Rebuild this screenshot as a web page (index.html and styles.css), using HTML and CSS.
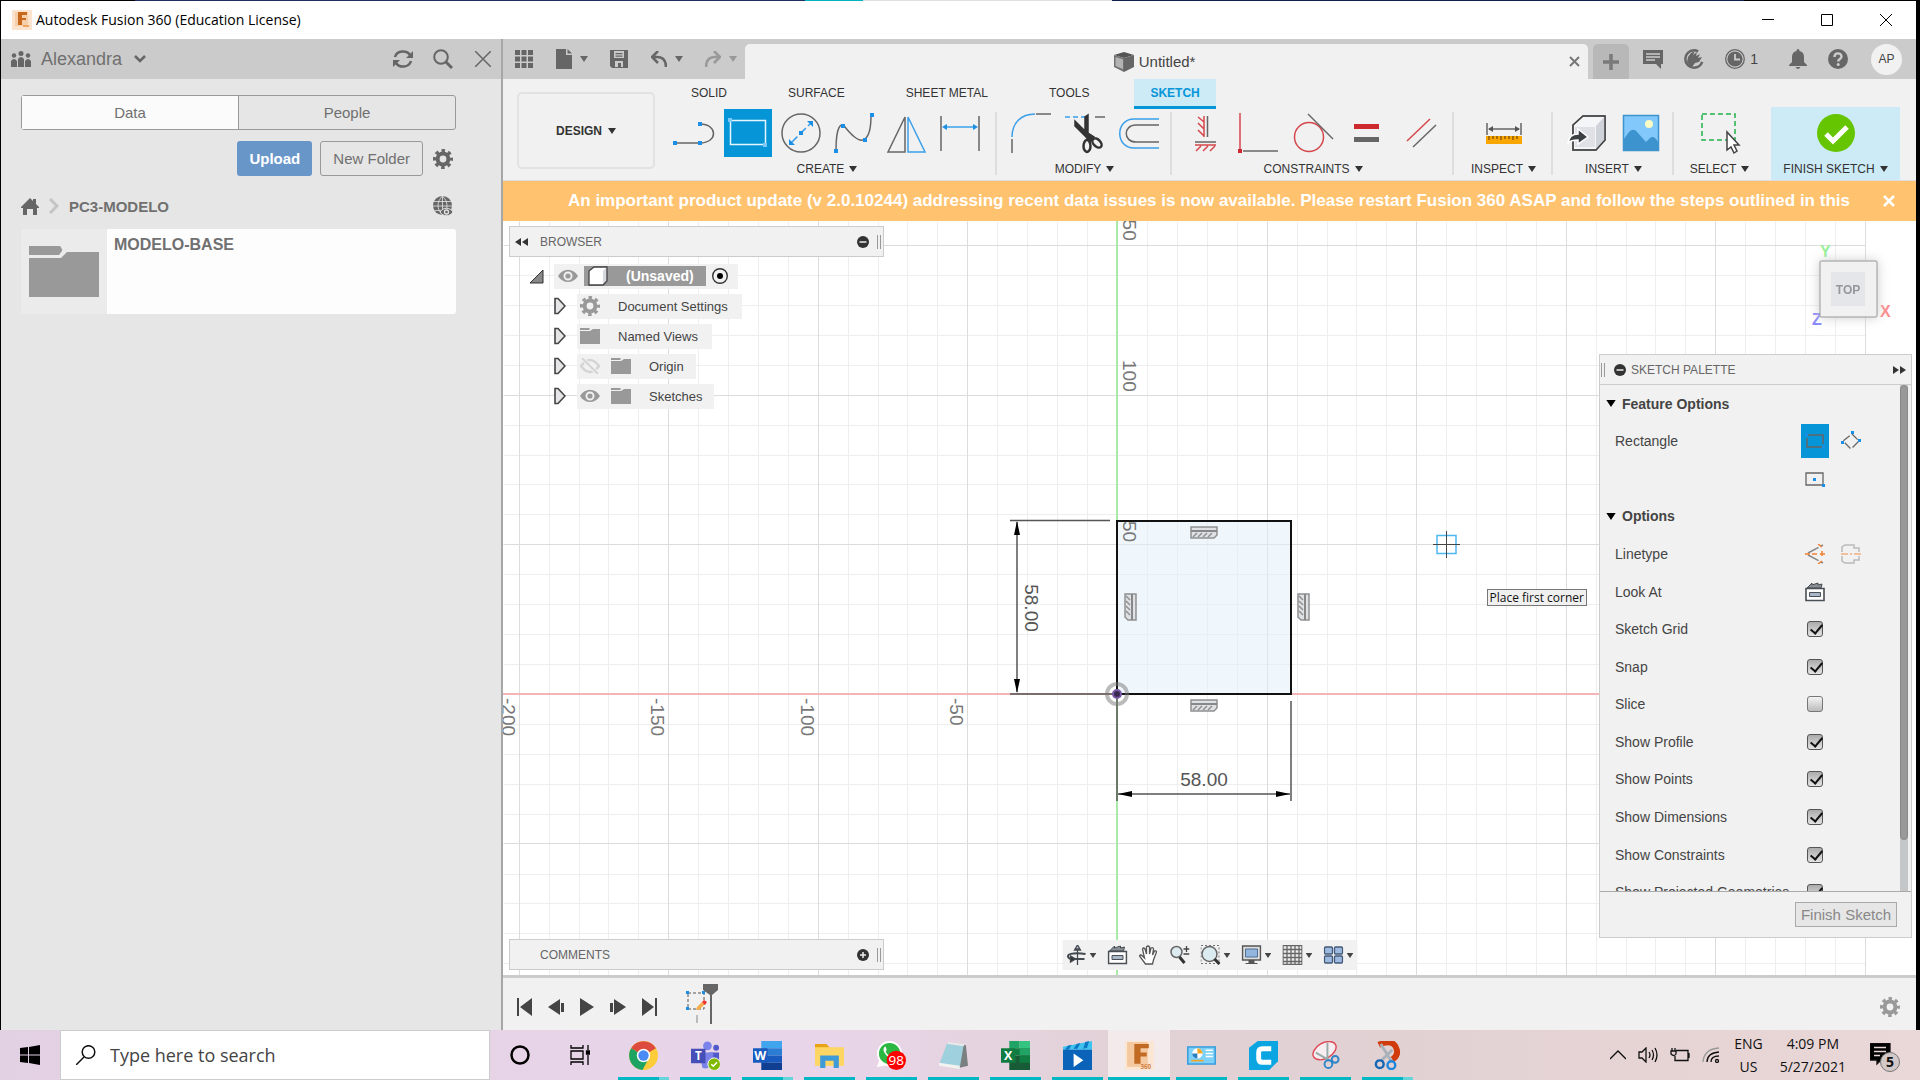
FILE: index.html
```html
<!DOCTYPE html>
<html lang="en">
<head>
    <meta charset="UTF-8">
    <meta name="viewport" content="width=device-width, initial-scale=1.0">
    <title>Autodesk Fusion 360 (Education License)</title>
    <link rel="stylesheet" href="styles.css">
</head>
<body>

<!-- shared icons -->
<svg class="sprite" aria-hidden="true">
    <symbol id="caret" viewBox="0 0 8 6"><path d="M0 0h8L4 6z"/></symbol>
    <symbol id="gear" viewBox="0 0 20 20">
        <circle cx="10" cy="10" r="5.4" fill="none" stroke="currentColor" stroke-width="4"/>
        <circle cx="10" cy="10" r="8.3" fill="none" stroke="currentColor" stroke-width="3.4" stroke-dasharray="3.4 3.12" stroke-dashoffset="1.7"/>
    </symbol>
    <symbol id="folder" viewBox="0 0 20 16"><path d="M0 0h9l1 1-1 1H0zM0 3h10l3-2h7v15H0z"/></symbol>
    <symbol id="eye" viewBox="0 0 20 14">
        <path fill-rule="evenodd" d="M0 7C5-1.500 15-1.500 20 7 15 15 5 15 0 7zM10 2.500a4.500 4.500 0 1 0 0 9 4.500 4.500 0 0 0 0-9z"/>
        <circle cx="10" cy="7" r="2.600"/>
    </symbol>
    <symbol id="expand" viewBox="0 0 12 18"><path d="M1 1.500h3L11 9l-7 7.500H1z" fill="#e6e6e8" stroke="#444" stroke-width="1.600"/></symbol>
    <symbol id="minus" viewBox="0 0 12 12"><circle cx="6" cy="6" r="6"/><path d="M2.500 6h7" stroke="#eee" stroke-width="1.500"/></symbol>
    <symbol id="plus" viewBox="0 0 12 12"><circle cx="6" cy="6" r="6"/><path d="M3 6h6M6 3v6" stroke="#eee" stroke-width="1.500"/></symbol>
    <symbol id="lookat" viewBox="0 0 20 20">
        <path d="M2 6l5-5v2l6-2v2l4-1-1 4z" fill="#8b9096" stroke="#444a50"/>
        <path d="M1 6.500h18v12H1z" fill="#fff" stroke="#4a4f55" stroke-width="1.600"/>
        <path d="M4.500 10.500h11v4h-11z" fill="#a9b7c8" stroke="#4a4f55"/>
    </symbol>
</svg>

<div class="window">
    <div class="desktop-edge"></div>
    <header class="title-bar">
        <svg class="app-logo" width="20" height="20" viewBox="0 0 20 20"><path fill="#fbe3cd" d="M0 0h20v20H0z"/><path fill="#f6cfaa" d="M3 2h13v14H3z"/><path fill="#c8681c" d="M6 2h9v3h-5v3h4v2h-4v5H6z"/><path fill="#eea663" d="M11 15h6v2h-6z"/></svg>
        <span>Autodesk Fusion 360 (Education License)</span>
        <div class="window-buttons">
            <button aria-label="Minimize"><svg width="12" height="12" viewBox="0 0 12 12"><path d="M0 5.500h12"/></svg></button>
            <button aria-label="Maximize"><svg width="12" height="12" viewBox="0 0 12 12"><path d="M.5.500h11v11H.5z"/></svg></button>
            <button aria-label="Close"><svg width="12" height="12" viewBox="0 0 12 12"><path d="M0 0l12 12M12 0L0 12"/></svg></button>
        </div>
    </header>

    <div class="content">
        <aside class="data-panel">
            <div class="data-header">
                <svg width="20" height="16" viewBox="0 0 20 16" fill="#666"><circle cx="10" cy="2.500" r="2.500"/><circle cx="3" cy="4.500" r="2.200"/><circle cx="17" cy="4.500" r="2.200"/><path d="M7 16V8q3-4 6 0v8zM0 16v-6q3-4 6 0v6zM14 16v-6q3-4 6 0v6z"/></svg>
                <button class="team">Alexandra <svg width="12" height="8" viewBox="0 0 12 8"><path d="M1 1l5 5 5-5" fill="none" stroke="#666" stroke-width="2.500"/></svg></button>
                <button aria-label="Refresh"><svg width="20" height="18" viewBox="0 0 20 18" fill="none" stroke="#666" stroke-width="2.500"><path d="M2 7c2-7 12-7 15-2M18 11c-2 7-12 7-15 2"/><path d="M20 1v7h-7zM0 17v-7h7z" fill="#666" stroke="none"/></svg></button>
                <button aria-label="Search"><svg width="20" height="20" viewBox="0 0 20 20" fill="none" stroke="#666"><circle cx="8" cy="8" r="6.800" stroke-width="2"/><path d="M13 13l6 6" stroke-width="3"/></svg></button>
                <button aria-label="Close panel"><svg width="16" height="16" viewBox="0 0 16 16" stroke="#666" stroke-width="1.500"><path d="M0 0l16 16M16 0L0 16"/></svg></button>
            </div>
            <div class="data-body">
                <div class="data-tabs">
                    <button class="active">Data</button>
                    <button>People</button>
                </div>
                <div class="data-actions">
                    <button class="upload">Upload</button>
                    <button class="new-folder">New Folder</button>
                    <button class="plain" aria-label="Settings"><svg width="20" height="20"><use href="#gear"/></svg></button>
                </div>
                <nav class="breadcrumb">
                    <a href="#" aria-label="Home"><svg width="18" height="17" viewBox="0 0 18 17" fill="#666"><path d="M9 0l3 3V1h3v5l3 3v1h-2v7h-4v-6H6v6H2v-7H0V9z"/></svg></a>
                    <svg width="10" height="16" viewBox="0 0 10 16"><path d="M1 1l7 7-7 7" fill="none" stroke="#c4c4c4" stroke-width="3"/></svg>
                    <a href="#">PC3-MODELO</a>
                    <button class="plain globe" aria-label="Open on the web"><svg width="20" height="20" viewBox="0 0 20 20"><circle cx="9.500" cy="9.500" r="9.500" fill="#666"/><path d="M0 5.500h19M0 10h19M2 14.500h15M9.500 0v19M9.500 0c-6 6-6 13 0 19M9.500 0c6 6 6 13 0 19" fill="none" stroke="#e6e6e6" stroke-width=".8"/><path d="M7 16c3-5 10-5 13 0-3 5-10 5-13 0z" fill="#666" stroke="#e6e6e6"/><circle cx="13.500" cy="16" r="2" fill="#666" stroke="#e6e6e6" stroke-width="1.300"/></svg></button>
                </nav>
                <a class="folder-card" href="#">
                    <span class="thumb"><svg width="70" height="51" viewBox="0 0 70 51" fill="#999"><path d="M0 0h31q3 4 2 5l-3 4H0z"/><path d="M0 12h32l6-6h32v45H0z"/></svg></span>
                    <span class="folder-name">MODELO-BASE</span>
                </a>
            </div>
        </aside>

        <main class="workspace">
            <div class="tab-bar">
                <div class="quick-access">
                    <button aria-label="Show data panel"><svg width="18" height="18" viewBox="0 0 18 18"><path d="M0 0h5v5H0zM6.500 0h5v5h-5zM13 0h5v5h-5zM0 6.500h5v5H0zM6.500 6.500h5v5h-5zM13 6.500h5v5h-5zM0 13h5v5H0zM6.500 13h5v5h-5zM13 13h5v5h-5z"/></svg></button>
                    <button aria-label="File"><svg width="16" height="20" viewBox="0 0 16 20"><path d="M0 0h10v6h6v14H0zM11.500 0L16 4.500h-4.500z"/></svg><svg class="caret" width="8" height="6"><use href="#caret"/></svg></button>
                    <button aria-label="Save"><svg width="18" height="18" viewBox="0 0 18 18"><path fill-rule="evenodd" d="M0 0h18v18H2l-2-2zM4 1v7h10V1zM5 11v6h8v-6z"/><path d="M5.500 3h7v1.300h-7zM5.500 5.500h7v1.300h-7zM8 13h3v4H8z"/></svg></button>
                    <button aria-label="Undo"><svg width="16" height="16" viewBox="0 0 16 16"><path d="M7 0v0L1 6l6 6M1 6h5q9 0 9 10" fill="none" stroke="#666" stroke-width="2.500"/></svg><svg class="caret" width="8" height="6"><use href="#caret"/></svg></button>
                    <button class="disabled" aria-label="Redo"><svg width="16" height="16" viewBox="0 0 16 16"><path d="M9 0l6 6-6 6M15 6h-5Q1 6 1 16" fill="none" stroke="#999" stroke-width="2.500"/></svg><svg class="caret" width="8" height="6"><use href="#caret"/></svg></button>
                </div>
                <div class="document-tab">
                    <svg width="20" height="20" viewBox="0 0 20 20"><path d="M0 3L10 0l10 3-10 3z" fill="#555"/><path d="M20 3v12l-10 5V6z" fill="#666"/><path d="M0 3l10 3v14L0 15z" fill="#707070"/><path d="M1.500 5L9 7.300v10L1.500 14z" fill="#b3b3b3"/></svg>
                    <span>Untitled*</span>
                    <button class="close-tab" aria-label="Close tab"><svg width="11" height="11" viewBox="0 0 11 11" stroke="#777" stroke-width="2"><path d="M1 1l9 9M10 1l-9 9"/></svg></button>
                </div>
                <button class="new-tab" aria-label="New tab"><svg width="16" height="16" viewBox="0 0 16 16"><path d="M0 8h16M8 0v16" stroke="#7a7a7a" stroke-width="3.500"/></svg></button>
                <div class="account">
                    <button aria-label="Comments"><svg width="20" height="19" viewBox="0 0 20 19"><path d="M0 0h20v14h-2v5l-5-5H0z"/><path d="M3 4h14M3 7h14M3 10h9" stroke="#ccc" stroke-width="1.300"/></svg></button>
                    <button aria-label="Extensions"><svg width="20" height="20" viewBox="0 0 20 20"><circle cx="10" cy="10" r="8.700" fill="none" stroke="#666" stroke-width="2.500" stroke-dasharray="42 13" stroke-dashoffset="-3"/><path d="M4 8l3-4 4-2-2 4 4-3-1 4 4-2-2 4 4-1-3 5-4 1-3 4-2-1-3-4z"/></svg></button>
                    <button aria-label="Job status"><svg width="20" height="20" viewBox="0 0 20 20"><circle cx="10" cy="10" r="9.300" fill="none" stroke="#666" stroke-width="1.300"/><circle cx="10" cy="10" r="7.600"/><path d="M10 5v5.500h5" fill="none" stroke="#ccc" stroke-width="1.800"/></svg><span>1</span></button>
                    <button class="bell" aria-label="Notifications"><svg width="18" height="20" viewBox="0 0 18 20"><path d="M9 0q1.500 0 1.500 2 4.500 1 4.500 6v5l3 3v1H0v-1l3-3V8q0-5 4.500-6Q7.500 0 9 0zM6.500 18h5q-2.500 4-5 0z"/></svg></button>
                    <button aria-label="Help"><svg width="20" height="20" viewBox="0 0 20 20"><circle cx="10" cy="10" r="10"/><path d="M6.500 8c0-5 7-4.500 7-.5 0 2.500-3.300 2.500-3.300 5" fill="none" stroke="#ccc" stroke-width="2.400"/><circle cx="10.200" cy="15.500" r="1.500" fill="#ccc"/></svg></button>
                    <button class="avatar">AP</button>
                </div>
            </div>

            <div class="ribbon">
                <button class="design">DESIGN <svg class="caret" width="8" height="6"><use href="#caret"/></svg></button>
                <div class="ribbon-main">
                    <nav class="ribbon-tabs">
                        <button>SOLID</button>
                        <button>SURFACE</button>
                        <button>SHEET METAL</button>
                        <button>TOOLS</button>
                        <button class="active">SKETCH</button>
                    </nav>
                    <div class="groups">
                        <section class="group create">
                            <div class="tools">
                                <button aria-label="Line"><svg viewBox="0 0 48 48"><path d="M4 34h25c18 0 18-19 0-19" /><path class="pt" d="M2 32h4v4H2zM27 32h4v4h-4zM27 13h4v4h-4z"/></svg></button>
                                <button class="active" aria-label="Rectangle"><svg viewBox="0 0 48 48"><path d="M6.500 11.500h35v24h-35z" stroke="#e8f4fb"/><path d="M4 9h4v4H4zM39 34h4v4h-4z" fill="#7cc8f8" stroke="none"/></svg></button>
                                <button aria-label="Circle"><svg viewBox="0 0 48 48"><circle cx="24" cy="24" r="19"/><path class="blue" d="M14 34l20-20" stroke-dasharray="9 3"/><path class="pt" d="M36 12v6l-6-6zM12 36v-6l6 6zM22 22h4v4h-4z"/></svg></button>
                                <button aria-label="Spline"><svg viewBox="0 0 48 48"><path d="M6 41c0-24 5-28 9-23s14 17 20 12c5-4 6-14 6-23"/><path class="pt" d="M4 40h4v4H4zM11 15h4v4h-4zM33 29h4v4h-4zM40 4h4v4h-4z"/></svg></button>
                                <button aria-label="Mirror"><svg viewBox="0 0 48 48"><path d="M22 8v35H5z"/><path class="blue" d="M25 8v35h17z"/></svg></button>
                                <button aria-label="Sketch dimension"><svg viewBox="0 0 48 48"><path d="M5 7v35M43 7v35"/><path class="blue" d="M8 18h32"/><path class="pt" d="M6 18l5-3v6zM42 18l-5-3v6z"/></svg></button>
                            </div>
                            <button class="group-label">CREATE <svg class="caret" width="8" height="6"><use href="#caret"/></svg></button>
                        </section>
                        <section class="group modify">
                            <div class="tools">
                                <button aria-label="Fillet"><svg viewBox="0 0 48 48"><path class="blue" d="M5 28C5 14 14 5 28 5"/><path d="M5 30v14M29 5h15"/></svg></button>
                                <button aria-label="Trim"><svg viewBox="0 0 48 48"><path class="blue" d="M4 8h22" stroke-dasharray="5 3"/><path d="M34 8h10"/><path d="M27 6v18l6 4-4 5-4-5L14 17v-5l10 10V8z" fill="#333" stroke="#333"/><ellipse cx="26" cy="37" rx="3.500" ry="6" stroke="#333" stroke-width="2.500"/><ellipse cx="36" cy="34" rx="3.500" ry="5.500" transform="rotate(-45 36 34)" stroke="#333" stroke-width="2.500"/></svg></button>
                                <button aria-label="Offset"><svg viewBox="0 0 48 48"><path class="blue" d="M44 10H19C0 10 0 39 19 39h25"/><path d="M44 16H21c-13 0-13 17 0 17h23"/></svg></button>
                            </div>
                            <button class="group-label">MODIFY <svg class="caret" width="8" height="6"><use href="#caret"/></svg></button>
                        </section>
                        <section class="group constraints">
                            <div class="tools">
                                <button aria-label="Horizontal or vertical"><svg viewBox="0 0 48 48"><path d="M26.500 7v21M14 33h21"/><path class="red" d="M23 7v21M17 8l6 5M17 14l6 6M17 21l6 6M14 36h21M20 37l-5 5M27 37l-5 5M34 37l-5 5"/></svg></button>
                                <button aria-label="Coincident"><svg viewBox="0 0 48 48"><path class="red" d="M5 4v36"/><path d="M8 42h35"/><path d="M3 40h4v4H3z" fill="#cc2a2f" stroke="none"/></svg></button>
                                <button aria-label="Tangent"><svg viewBox="0 0 48 48"><circle class="red" cx="20" cy="28" r="14.500"/><path d="M19 5l25 25"/></svg></button>
                                <button aria-label="Equal"><svg viewBox="0 0 48 48"><path d="M11 15h25v5H11z" fill="#cc2a2f" stroke="none"/><path d="M11 28h25v5H11z" fill="#666" stroke="none"/></svg></button>
                                <button aria-label="Parallel"><svg viewBox="0 0 48 48"><path class="red" d="M10 32L33 10"/><path d="M16 38l23-22"/></svg></button>
                            </div>
                            <button class="group-label">CONSTRAINTS <svg class="caret" width="8" height="6"><use href="#caret"/></svg></button>
                        </section>
                        <section class="group inspect">
                            <div class="tools">
                                <button aria-label="Measure"><svg viewBox="0 0 48 48"><path d="M7 14v12M41 14v12M9 20h30"/><path d="M8 20l5-3v6zM40 20l-5-3v6z" fill="#555" stroke="none"/><path d="M6 27h36v8H6z" fill="#f9a602" stroke="none"/><path d="M9 27v4M13 27v3M17 27v3M21 27v4M25 27v3M29 27v3M33 27v4M37 27v3" stroke="#8a5c00"/></svg></button>
                            </div>
                            <button class="group-label">INSPECT <svg class="caret" width="8" height="6"><use href="#caret"/></svg></button>
                        </section>
                        <section class="group insert">
                            <div class="tools">
                                <button aria-label="Insert derive"><svg viewBox="0 0 48 48"><path d="M10 16l10-9h22v24l-9 10H10z" fill="#f4f5f7"/><path d="M33 17l9-10v24l-9 10z" fill="#cfd2d8" stroke="none"/><path d="M12 18h20v20H12z" fill="#dfe1e6" stroke="none"/><path d="M10 16l10-9h22v24l-9 10H10z" stroke="#444"/><path d="M5 34c1-7 5-9 10-9v-5l10 8-10 7v-4c-4 0-7 0-10 3z" fill="#3c4043" stroke="#fff"/></svg></button>
                                <button aria-label="Canvas"><svg viewBox="0 0 48 48"><path d="M6.500 6.500h35v35h-35z" fill="#82c8fb" stroke="#3d93cd"/><path d="M7 30l5-7q5-5 9 1l8 9 4-4q4-3 8 4v8H7z" fill="#3d93cd" stroke="none"/><circle cx="32" cy="15" r="4" fill="#fbfbc5" stroke="none"/></svg></button>
                            </div>
                            <button class="group-label">INSERT <svg class="caret" width="8" height="6"><use href="#caret"/></svg></button>
                        </section>
                        <section class="group select">
                            <div class="tools">
                                <button aria-label="Select"><svg viewBox="0 0 48 48"><path d="M6 5h33v26H6z" stroke="#22b14c" stroke-width="1.500" stroke-dasharray="5 3"/><path d="M31 23v18l4-3 3 6 3-2-3-6h5z" fill="#fff" stroke="#444"/></svg></button>
                            </div>
                            <button class="group-label">SELECT <svg class="caret" width="8" height="6"><use href="#caret"/></svg></button>
                        </section>
                        <section class="group finish">
                            <div class="tools">
                                <button aria-label="Finish sketch"><svg viewBox="0 0 48 48"><circle cx="24" cy="24" r="19" fill="#65c500" stroke="none"/><path d="M14 25l7 7 14-14" stroke="#fff" stroke-width="5"/></svg></button>
                            </div>
                            <button class="group-label">FINISH SKETCH <svg class="caret" width="8" height="6"><use href="#caret"/></svg></button>
                        </section>
                    </div>
                </div>
            </div>

            <div class="banner" role="alert">
                <p>An important product update (v 2.0.10244) addressing recent data issues is now available. Please restart Fusion 360 ASAP and follow the steps outlined in this</p>
                <button aria-label="Dismiss"><svg width="12" height="12" viewBox="0 0 12 12"><path d="M1 1l10 10M11 1L1 11" stroke="#fff" stroke-width="2.500"/></svg></button>
            </div>

            <div class="canvas">
                <svg class="drawing" viewBox="503 221 1413 754" preserveAspectRatio="xMidYMid slice">
                    <g transform="translate(.5 .5)" fill="none">
                        <path stroke="#eee" d="M549 221v756M579 221v756M608 221v756M638 221v756M698 221v756M728 221v756M758 221v756M788 221v756M848 221v756M878 221v756M907 221v756M937 221v756M997 221v756M1027 221v756M1057 221v756M1087 221v756M1147 221v756M1177 221v756M1207 221v756M1237 221v756M1297 221v756M1327 221v756M1356 221v756M1386 221v756M1446 221v756M1476 221v756M1506 221v756M1536 221v756M1596 221v756M1626 221v756M1655 221v756M1685 221v756M1745 221v756M1775 221v756M1805 221v756M1835 221v756"/>
                        <path stroke="#eee" d="M503 275h1362M503 305h1362M503 335h1362M503 365h1362M503 425h1362M503 455h1362M503 484h1362M503 514h1362M503 574h1362M503 604h1362M503 634h1362M503 664h1362M503 724h1362M503 754h1362M503 784h1362M503 814h1362M503 874h1362M503 903h1362M503 933h1362M503 963h1362"/>
                        <path stroke="#dcdcdc" d="M519 221v756M668 221v756M818 221v756M967 221v756M1267 221v756M1416 221v756M1566 221v756M1715 221v756M1865 221v756M503 245h1362M503 395h1362M503 544h1362M503 843h1362"/>
                    </g>
                    <path d="M503 694h1362" stroke="#f3b5b5" stroke-width="2"/>
                    <path d="M1117 221v756" stroke="#a9eaa9" stroke-width="2"/>

                    <!-- 58 x 58 profile -->
                    <path d="M1117 521h174v173h-174z" fill="#dff0fb" fill-opacity=".5" stroke="#111" stroke-width="2"/>

                    <g class="axis-labels">
                        <text transform="translate(1123 209) rotate(90)">150</text>
                        <text transform="translate(1123 360) rotate(90)">100</text>
                        <text transform="translate(1123 521) rotate(90)">50</text>
                        <text transform="translate(950 698) rotate(90)">-50</text>
                        <text transform="translate(801 698) rotate(90)">-100</text>
                        <text transform="translate(651 698) rotate(90)">-150</text>
                        <text transform="translate(502 698) rotate(90)">-200</text>
                    </g>

                    <g stroke="#555" stroke-width="1.500">
                        <path d="M1010 520.500h100M1010 694h107M1017 522v170M1117 694v107M1291 701v100M1118 794h172"/>
                    </g>
                    <path d="M1017 521l3 14h-6zM1017 693l3-14h-6zM1118 794l14-3v6zM1290 794l-14-3v6z"/>
                    <g class="dimension">
                        <text transform="translate(1025 608) rotate(90)" text-anchor="middle">58.00</text>
                        <text x="1204" y="786" text-anchor="middle">58.00</text>
                    </g>
                    <circle cx="1117" cy="694" r="10" fill="none" stroke="#777" stroke-opacity=".5" stroke-width="4"/>
                    <circle cx="1117" cy="694" r="4" fill="#3a2a50" stroke="#7a5aa8" stroke-width="2"/>

                    <symbol id="edge" viewBox="0 0 28 13"><path d="M1 1h26v8l-3 3H1z" fill="#dfe2e5" stroke="#909090" stroke-width="1.500"/><path d="M1 5h26" stroke="#888" stroke-width="2"/><path d="M7 7l-4 4M12 7l-4 4M17 7l-4 4M22 7l-4 4" stroke="#909090" stroke-width="1.500"/></symbol>
                    <use href="#edge" x="1190" y="526" width="28" height="13"/>
                    <use href="#edge" x="1190" y="699" width="28" height="13"/>
                    <use href="#edge" width="28" height="13" transform="translate(1137 593) rotate(90)"/>
                    <use href="#edge" width="28" height="13" transform="translate(1310 593) rotate(90)"/>

                    <!-- cursor -->
                    <path d="M1437 535.500h19v18h-19z" fill="none" stroke="#4db8f0" stroke-width="1.500"/>
                    <path d="M1433 544.500h27M1446.500 531v27" stroke="#444"/>

                    <!-- view cube -->
                    <g class="axis-names">
                        <text x="1820" y="257" fill="#97f097">Y</text>
                        <text x="1880" y="317" fill="#ff8c8c">X</text>
                        <text x="1812" y="325" fill="#8888ff">Z</text>
                    </g>
                    <g class="view-cube">
                        <rect x="1820" y="261" width="57" height="56" rx="1" fill="#f1f1f1" stroke="#999"/>
                        <path d="M1831 272h34v34h-34z" fill="#e5e6e9"/>
                        <text x="1848" y="294" text-anchor="middle">TOP</text>
                    </g>
                </svg>

                <div class="browser">
                    <div class="panel-header">
                        <button aria-label="Collapse"><svg width="13" height="8" viewBox="0 0 13 8"><path d="M6 0v8L0 4zM13 0v8L7 4z"/></svg></button>
                        <span>BROWSER</span>
                        <button aria-label="Hide"><svg width="12" height="12"><use href="#minus"/></svg></button>
                        <i class="grip"></i>
                    </div>
                    <ul class="tree">
                        <li class="root">
                            <svg width="15" height="15" viewBox="0 0 15 15"><path d="M14 1v13H1z" fill="#888" stroke="#333"/></svg>
                            <span class="node">
                                <svg class="grey" width="20" height="14"><use href="#eye"/></svg>
                                <span class="selected"><svg width="20" height="20" viewBox="0 0 20 20"><path d="M1 5l5-4h13v14l-4 4H1z" fill="#fff"/><path d="M15 5l4-4v14l-4 4z" fill="#d5d8de"/><path d="M1 5l5-4h13v14l-4 4H1z" fill="none" stroke="#444" stroke-width="1.300"/></svg>(Unsaved)</span>
                                <svg width="16" height="16" viewBox="0 0 16 16"><circle cx="8" cy="8" r="7.300" fill="none" stroke="#333" stroke-width="1.400"/><circle cx="8" cy="8" r="3"/></svg>
                            </span>
                        </li>
                        <li><svg width="12" height="18"><use href="#expand"/></svg><span class="node"><svg class="grey" width="20" height="20"><use href="#gear"/></svg>Document Settings</span></li>
                        <li><svg width="12" height="18"><use href="#expand"/></svg><span class="node"><svg class="grey" width="20" height="16"><use href="#folder"/></svg>Named Views</span></li>
                        <li><svg width="12" height="18"><use href="#expand"/></svg><span class="node nested"><svg class="faded" width="20" height="16" viewBox="0 0 20 16"><path d="M1 8q9-12 18 0-9 12-18 0z" fill="none" stroke="#d4d4d4" stroke-width="2.500"/><path d="M2 0l16 16" stroke="#f1f1f1" stroke-width="4"/><path d="M2 0l16 16" stroke="#d4d4d4" stroke-width="2"/></svg><svg class="grey" width="20" height="16"><use href="#folder"/></svg>Origin</span></li>
                        <li><svg width="12" height="18"><use href="#expand"/></svg><span class="node nested"><svg class="grey" width="20" height="14"><use href="#eye"/></svg><svg class="grey" width="20" height="16"><use href="#folder"/></svg>Sketches</span></li>
                    </ul>
                </div>

                <div class="comments panel-header">
                    <span>COMMENTS</span>
                    <button aria-label="Show comments"><svg width="12" height="12"><use href="#plus"/></svg></button>
                    <i class="grip"></i>
                </div>

                <div class="nav-bar">
                    <button aria-label="Orbit"><svg width="20" height="20" viewBox="0 0 20 20" fill="none" stroke="#444a50" stroke-width="1.300"><path d="M11 4v16M9 4h4M11 0l3 5H8z" fill="#ccd"/><path d="M4 14C-4 9 8 7 19 9M6 14h12" stroke-width="2"/><path d="M4 11v6l5-3z" fill="#333"/></svg><svg class="caret" width="7" height="5"><use href="#caret"/></svg></button>
                    <button aria-label="Look at"><svg width="20" height="20"><use href="#lookat"/></svg></button>
                    <button aria-label="Pan"><svg width="20" height="20" viewBox="0 0 20 20"><path d="M7 19l-6-8q1-2 3 0l2 2-2-9q1-2 2.500 0L8 9V2q1.500-2 3 0v7l1.500-6q2-1 2.500 1l-1 6 2-4q2-.5 2 1l-3 8-1 4z" fill="#fff" stroke="#555" stroke-width="1.300"/></svg></button>
                    <button aria-label="Zoom"><svg width="20" height="20" viewBox="0 0 20 20"><circle cx="7" cy="7" r="5.500" fill="#dcebf0" stroke="#666" stroke-width="1.500"/><path d="M10 12l5 6" stroke="#333" stroke-width="3"/><path d="M14 4h6M17 1v6M14 9h6" stroke="#444" stroke-width="1.300"/></svg></button>
                    <button aria-label="Fit"><svg width="20" height="20" viewBox="0 0 20 20"><path d="M.5.500h18v18H.5z" fill="none" stroke="#777" stroke-dasharray="2 2"/><circle cx="9" cy="9" r="7.500" fill="#dcebf0" stroke="#666" stroke-width="1.500"/><path d="M14 14l5 5" stroke="#333" stroke-width="3"/></svg><svg class="caret" width="7" height="5"><use href="#caret"/></svg></button>
                    <button aria-label="Display settings"><svg width="20" height="20" viewBox="0 0 20 20"><path d="M1 1h18v14H1z" fill="#ddd" stroke="#555" stroke-width="1.500"/><path d="M4 4h12v8H4z" fill="#92b5de" stroke="#4f6f96"/><path d="M7 15h6v3h3v1H4v-1h3z" fill="#555"/></svg><svg class="caret" width="7" height="5"><use href="#caret"/></svg></button>
                    <button aria-label="Grid settings"><svg width="20" height="20" viewBox="0 0 20 20"><path d="M.5.500h19v19H.5zM4.500 0v20M8.500 0v20M12.500 0v20M16.500 0v20M0 4.500h20M0 8.500h20M0 12.500h20M0 16.500h20" fill="#eee" stroke="#666" stroke-width="1.300"/></svg><svg class="caret" width="7" height="5"><use href="#caret"/></svg></button>
                    <button aria-label="Viewports"><svg width="20" height="18" viewBox="0 0 20 18" fill="#9dbbe0" stroke="#445a78" stroke-width="1.300"><rect x="1" y="1" width="8" height="7" rx="1"/><rect x="11" y="1" width="8" height="7" rx="1"/><rect x="1" y="10" width="8" height="7" rx="1"/><rect x="11" y="10" width="8" height="7" rx="1"/></svg><svg class="caret" width="7" height="5"><use href="#caret"/></svg></button>
                </div>

                <div class="tooltip" role="tooltip">Place first corner</div>

                <form class="palette">
                    <div class="palette-header">
                        <i class="grip"></i>
                        <button type="button" aria-label="Collapse palette"><svg width="12" height="12"><use href="#minus"/></svg></button>
                        <span>SKETCH PALETTE</span>
                        <button type="button" aria-label="Dock"><svg width="13" height="8" viewBox="0 0 13 8"><path d="M0 0v8l6-4zM7 0v8l6-4z"/></svg></button>
                    </div>
                    <div class="palette-body">
                        <div class="options">
                            <h2><svg width="10" height="7"><use href="#caret"/></svg>Feature Options</h2>
                            <div class="option"><span>Rectangle</span>
                                <button type="button" class="active" aria-label="2-point rectangle"><svg width="20" height="16" viewBox="0 0 20 16"><path d="M2 2h16v12H2z" fill="none" stroke="#666" stroke-width="1.500" stroke-dasharray="25 3"/><path d="M0 0h3v3H0zM17 13h3v3h-3z" fill="#1b8fe6"/></svg></button>
                                <button type="button" aria-label="3-point rectangle"><svg width="20" height="20" viewBox="0 0 20 20"><path d="M11 3l7 7-8 8-8-8z" fill="none" stroke="#666" stroke-width="1.300" stroke-dasharray="8 3"/><path d="M10 0h3v3h-3zM17 8h3v3h-3zM0 10h3v3H0z" fill="#1b8fe6"/></svg></button>
                            </div>
                            <div class="option"><span></span>
                                <button type="button" aria-label="Center rectangle"><svg width="20" height="16" viewBox="0 0 20 16"><path d="M1 2h17v12H1z" fill="none" stroke="#666" stroke-width="1.300"/><path d="M8 7h3v3H8zM17 13h3v3h-3z" fill="#1b8fe6"/></svg></button>
                            </div>
                            <h2><svg width="10" height="7"><use href="#caret"/></svg>Options</h2>
                            <div class="option"><span>Linetype</span>
                                <button type="button" aria-label="Construction"><svg width="20" height="20" viewBox="0 0 20 20" fill="none" stroke-width="1.500"><path d="M3 9l15-8M3 11l15 8" stroke="#888" stroke-dasharray="12 2"/><path d="M0 10h14M17 7v6M15 10h5M13 0l4 3M13 20l4-3" stroke="#f08030" stroke-dasharray="5 2"/></svg></button>
                                <button type="button" aria-label="Centerline"><svg width="20" height="20" viewBox="0 0 20 20" fill="none" stroke="#bbb" stroke-width="1.500"><path d="M1 8V3l3-2h9v3h5v4M1 12v5l3 2h9v-3h5v-4"/><path d="M0 10h20" stroke="#f0b080" stroke-dasharray="7 2 2 2"/></svg></button>
                            </div>
                            <div class="option"><span>Look At</span>
                                <button type="button" aria-label="Look at"><svg width="20" height="20"><use href="#lookat"/></svg></button>
                            </div>
                            <label class="option"><span>Sketch Grid</span><input type="checkbox" checked></label>
                            <label class="option"><span>Snap</span><input type="checkbox" checked></label>
                            <label class="option"><span>Slice</span><input type="checkbox"></label>
                            <label class="option"><span>Show Profile</span><input type="checkbox" checked></label>
                            <label class="option"><span>Show Points</span><input type="checkbox" checked></label>
                            <label class="option"><span>Show Dimensions</span><input type="checkbox" checked></label>
                            <label class="option"><span>Show Constraints</span><input type="checkbox" checked></label>
                            <label class="option"><span>Show Projected Geometries</span><input type="checkbox" checked></label>
                        </div>
                        <div class="scrollbar"><i></i></div>
                    </div>
                    <div class="palette-footer"><button type="button">Finish Sketch</button></div>
                </form>
            </div>

            <div class="timeline">
                <button aria-label="Go to start"><svg width="16" height="18" viewBox="0 0 16 18"><path d="M0 0h2v18H0zM15 0v18L3 9z"/></svg></button>
                <button aria-label="Step back"><svg width="16" height="18" viewBox="0 0 16 18"><path d="M12 1v16L0 9zM13 5h3v9h-3z"/></svg></button>
                <button aria-label="Play"><svg width="16" height="18" viewBox="0 0 16 18"><path d="M1 0v18l14-9z"/></svg></button>
                <button aria-label="Step forward"><svg width="16" height="18" viewBox="0 0 16 18"><path d="M4 1v16l12-8zM0 5h3v9H0z"/></svg></button>
                <button aria-label="Go to end"><svg width="16" height="18" viewBox="0 0 16 18"><path d="M14 0h2v18h-2zM1 0v18l12-9z"/></svg></button>
                <button class="feature" aria-label="Sketch1"><svg width="34" height="40" viewBox="0 0 34 40"><path d="M4 9h16v16H4z" fill="none" stroke="#555" stroke-dasharray="3 2"/><path d="M2 7h3v3H2zM18 7h3v3h-3zM2 23h3v3H2z" fill="#1b8fe6"/><path d="M12 26l1-3 5-5 3 2-6 6z" fill="#f4ac4c"/><path d="M18 18l2-2 3 2-2 3z" fill="#e33"/><path d="M13 31v8" stroke="#bbb" stroke-width="2"/><path d="M19 0h15v6l-6 5v29h-2V11l-7-5z" fill="#666"/></svg></button>
                <button class="timeline-settings" aria-label="Timeline settings"><svg width="20" height="20"><use href="#gear"/></svg></button>
            </div>
        </main>
    </div>
</div>

<footer class="taskbar">
    <button class="start" aria-label="Start"><svg width="20" height="20" viewBox="0 0 20 20"><path d="M0 3l8-1v7.500H0zM9 2l11-2v9.500H9zM0 10.500h8V18l-8-1zM9 10.500h11V20L9 18z"/></svg></button>
    <label class="search">
        <svg width="20" height="20" viewBox="0 0 20 20" fill="none" stroke="#111" stroke-width="1.500"><circle cx="12.500" cy="7" r="6.300"/><path d="M8 12l-8 8"/></svg>
        <input type="text" placeholder="Type here to search" aria-label="Type here to search">
    </label>
    <button class="cortana" aria-label="Cortana"><svg width="20" height="20" viewBox="0 0 20 20"><circle cx="10" cy="10" r="8.500" fill="none" stroke="#000" stroke-width="2.500"/></svg></button>
    <button aria-label="Task view"><svg width="20" height="20" viewBox="0 0 20 20" fill="none" stroke="#000" stroke-width="1.300"><path d="M1 0v3h12V0M1 6h12v8H1zM1 20v-3h12v3M18 0v5M18 10v10"/><path d="M16.500 6h3v3h-3z" fill="#000"/></svg></button>
    <div class="apps">
        <button class="stacked" aria-label="Chrome"><svg viewBox="0 0 28 28"><circle cx="14" cy="14" r="14" fill="#fdcc3b"/><path d="M14 14L2 7a14 14 0 0 1 24 0z" fill="#dd4b3e"/><path d="M14 14L2 7a14 14 0 0 0 11 21l6-11z" fill="#1da462"/><circle cx="14" cy="14" r="6.500" fill="#fff"/><circle cx="14" cy="14" r="5" fill="#4a8af4"/></svg></button>
        <button aria-label="Teams"><svg viewBox="0 0 30 30"><circle cx="17" cy="5" r="4.500" fill="#7b83eb"/><circle cx="26" cy="7" r="3" fill="#5059c9"/><path d="M19 12h10v8q-2 6-8 5z" fill="#5059c9"/><path d="M8 12h15v10q-3 8-11 6z" fill="#7b83eb"/><path d="M0 8h15v15H0z" fill="#464eb8"/><text x="7.500" y="20" text-anchor="middle">T</text><circle cx="24" cy="24" r="6.500" fill="#7fba00" stroke="#fff"/><path d="M21 24l2 2 4-4" fill="none" stroke="#fff" stroke-width="1.500"/></svg></button>
        <button class="stacked" aria-label="Word"><svg viewBox="0 0 28 28"><path d="M8 0h20v7H8z" fill="#41a5ee"/><path d="M8 7h20v7H8z" fill="#2b7cd3"/><path d="M8 14h20v7H8z" fill="#185abd"/><path d="M8 21h20v7H8z" fill="#103f91"/><path d="M0 7h14v14H0z" fill="#185abd"/><text x="7" y="18" text-anchor="middle">W</text></svg></button>
        <button aria-label="File Explorer"><svg viewBox="0 0 28 28"><path d="M0 3h11l3 3v4H0z" fill="#e8a317"/><path d="M0 6h28v18H0z" fill="#ffd664"/><path d="M5 26V14h18v12h-5v-7h-8v7z" fill="#3f9ad8"/></svg></button>
        <button aria-label="WhatsApp"><svg viewBox="0 0 30 30"><circle cx="13" cy="13" r="13" fill="#fff"/><path d="M0 27l3-9 7 7z" fill="#fff"/><circle cx="13" cy="13" r="11" fill="#2cb742"/><path d="M8 6q-3 3 1 8 5 6 10 4v-3l-4-2-2 2q-3-1-4-4l1-2-1-3z" fill="#fff"/><circle cx="20" cy="20" r="10" fill="#f00"/><text class="count" x="20" y="25" text-anchor="middle">98</text></svg></button>
        <button aria-label="Notepad"><svg viewBox="0 0 28 28"><path d="M9 2l17 2 2 20-9 2z" fill="#7a7f80"/><path d="M8 2l16 1-4 23-20-3z" fill="#9fd0de"/><path d="M0 21l20 3v3L0 24z" fill="#f2f2ee"/><path d="M9 1l15 2v2L8 3z" fill="#e8e8e8"/></svg></button>
        <button aria-label="Excel"><svg viewBox="0 0 28 28"><path d="M8 0h10v7H8z" fill="#21a366"/><path d="M18 0h10v7H18z" fill="#33c481"/><path d="M8 7h20v7H8z" fill="#107c41"/><path d="M18 7h10v7H18z" fill="#21a366"/><path d="M8 14h20v14H8z" fill="#185c37"/><path d="M18 14h10v7H18z" fill="#107c41"/><path d="M0 7h14v14H0z" fill="#107c41"/><text x="7" y="18" text-anchor="middle">X</text></svg></button>
        <button aria-label="Movies"><svg viewBox="0 0 30 30"><path d="M0 6l30-6v9H0z" fill="#3ec3f0"/><path d="M5 5l4-1-3 5H2zM14 3l4-1-3 6h-4zM23 1l4-1-2 7-4 1z" fill="#0c7ac4"/><path d="M0 9h30v21H0z" fill="#0a63b8"/><path d="M11 13l10 7-10 7z" fill="#fff"/></svg></button>
        <button class="current" aria-label="Fusion 360"><svg viewBox="0 0 28 28"><path d="M0 0h28v28H0z" fill="#fbe6d3"/><path d="M2 1h20v24H2z" fill="#f5c9a0"/><path d="M9 3h14v4h-8v4h6v4h-6v7H9z" fill="#c06a24"/><text class="tiny" x="20" y="27" text-anchor="middle">360</text></svg></button>
        <button aria-label="Control Panel"><svg viewBox="0 0 28 28"><path d="M0 5h28v18H0z" fill="#3c9fdc"/><path d="M1.500 6.500h25v15h-25z" fill="#7dd0f7"/><circle cx="10" cy="12" r="5" fill="#fff"/><path d="M10 12V7a5 5 0 0 1 5 5z" fill="#f5a623"/><path d="M10 12H5a5 5 0 0 0 5 5z" fill="#2a7fc0"/><path d="M18 9h7M18 12h7M18 15h7" stroke="#fff" stroke-width="1.500"/><path d="M4 19h12" stroke="#f5a623" stroke-width="1.500"/></svg></button>
        <button aria-label="Cura"><svg viewBox="0 0 30 30"><path d="M0 7l9-7h21v21l-9 9H0z" fill="#0ba6e2"/><path d="M23 8H14q-4 0-4 4v6q0 4 4 4h9" fill="none" stroke="#fff" stroke-width="5"/></svg></button>
        <button aria-label="Snipping Tool"><svg viewBox="0 0 28 30" fill="none"><ellipse cx="13" cy="10" rx="13" ry="8" transform="rotate(-30 13 10)" fill="#f6eef0" stroke="#dd4a58" stroke-width="1.500"/><path d="M4 12l14 8M16 2v18" stroke="#9aa" stroke-width="2"/><circle cx="17" cy="24" r="4" stroke="#2d86c9" stroke-width="2"/><circle cx="24" cy="19" r="3.500" stroke="#2d86c9" stroke-width="2"/></svg></button>
        <button class="stacked" aria-label="Snip &amp; Sketch"><svg viewBox="0 0 28 30" fill="none"><path d="M5 4q12-6 17 1 5 9-3 14" stroke="#d13a0a" stroke-width="6"/><path d="M7 3l11 18M19 9L8 20" stroke="#a9b2b8" stroke-width="3"/><circle cx="6" cy="24" r="4" stroke="#1266b5" stroke-width="2.500"/><circle cx="18" cy="25" r="4" stroke="#1d86dd" stroke-width="2.500"/></svg></button>
    </div>
    <div class="tray">
        <button aria-label="Show hidden icons"><svg width="16" height="10" viewBox="0 0 16 10"><path d="M0 9l8-8 8 8"/></svg></button>
        <button aria-label="Volume"><svg width="20" height="16" viewBox="0 0 20 16"><path d="M1 5h3l4-4v14l-4-4H1zM11 5q2 3 0 6M14 3q3 5 0 10M17 1q4 7 0 14"/></svg></button>
        <button aria-label="Battery"><svg width="20" height="14" viewBox="0 0 20 14"><path d="M6 2.500h12v10H5V8M19 5v5M1 3h5v3q-2 3-5 0zM2 0v3M5 0v3"/></svg></button>
        <button aria-label="Wi-Fi"><svg width="18" height="16" viewBox="0 0 18 16"><path d="M1 15Q2 2 17 1" stroke="#999"/><path d="M5 15Q5 6 17 5M9 15q0-6 8-6"/><circle cx="15" cy="14" r="1.500"/></svg></button>
        <button class="language">ENG<br>US</button>
        <button class="clock">4:09 PM<br>5/27/2021</button>
        <button class="action-center" aria-label="5 notifications"><svg width="30" height="30" viewBox="0 0 30 30"><path d="M0 0h20v17h-9l-4 4v-4H0z" fill="#000"/><path d="M4 4.500h12M4 8.500h12M4 12.500h6" stroke="#ead8d8" stroke-width="1.300"/></svg><span>5</span></button>
    </div>
</footer>

</body>
</html>
```
FILE: styles.css
```css
* {
    box-sizing: border-box;
}

body {
    margin: 0;
    height: 100vh;
    display: flex;
    flex-direction: column;
    background-color: #000;
    color: #444;
    font-family: "Liberation Sans", Arial, sans-serif;
    font-size: 14px;
    overflow: hidden;
}

button {
    display: flex;
    align-items: center;
    justify-content: center;
    padding: 0;
    border: none;
    background: none;
    color: inherit;
    font: inherit;
    cursor: pointer;
}

a {
    color: inherit;
    text-decoration: none;
}

svg {
    display: block;
    flex-shrink: 0;
}

.sprite {
    position: absolute;
    width: 0;
    height: 0;
}

.window {
    flex: 1;
    min-height: 0;
    display: flex;
    flex-direction: column;
    padding: 0 4px 0 1px;
}

.desktop-edge {
    height: 1px;
    background: linear-gradient(to right, #000 7%, #1e2f60 7% 42%, #00b3c0 42% 45%, #e0e0e0 45% 58%, #10204a 58% 91%, #000 91%);
}

/* Title bar */
.title-bar {
    height: 38px;
    display: flex;
    align-items: center;
    gap: 4px;
    padding: 0 1px 1px 11px;
    background-color: #fff;
    color: #000;
    font-family: "Open Sans", "Noto Sans", sans-serif;
    font-size: 14px;
}

.window-buttons {
    display: flex;
    margin-left: auto;
}

.window-buttons button {
    width: 59px;
    height: 37px;
}

.window-buttons svg {
    fill: none;
    stroke: #000;
}

.content {
    flex: 1;
    min-height: 0;
    display: flex;
}

/* Data panel */
.data-panel {
    width: 502px;
    flex-shrink: 0;
    background-color: #e6e6e6;
    border-right: 2px solid #a6a6a6;
    color: #707070;
}

.data-header {
    height: 40px;
    display: flex;
    align-items: center;
    gap: 20px;
    padding: 0 10px;
    background-color: #cbcbcb;
}

.team {
    gap: 12px;
    margin-right: auto;
    margin-left: -10px;
    font-size: 18px;
}

.data-header button:last-child {
    margin-left: 2px;
}

.data-body {
    padding: 16px 45px 0 20px;
}

.data-tabs {
    display: flex;
    border: 1px solid #999;
    border-radius: 3px;
    font-size: 15px;
}

.data-tabs button {
    flex: 1;
    height: 33px;
}

.data-tabs .active {
    background-color: #fbfbfb;
    border-right: 1px solid #999;
}

.data-actions {
    display: flex;
    justify-content: flex-end;
    gap: 8px;
    margin-top: 11px;
    font-size: 15px;
}

.upload,
.new-folder {
    height: 35px;
    padding: 0 12px;
    border-radius: 3px;
}

.upload {
    background-color: #6996c9;
    color: #fff;
    font-weight: bold;
}

.new-folder {
    border: 1px solid #999;
}

.plain {
    padding: 0 3px 0 2px;
    color: #666;
}

.breadcrumb {
    height: 53px;
    display: flex;
    align-items: center;
    gap: 10px;
    padding-top: 7px;
    font-size: 15px;
    font-weight: bold;
}

.globe {
    margin-left: auto;
}

.folder-card {
    height: 85px;
    display: flex;
    border-radius: 3px;
    background-color: #fdfdfd;
    font-size: 16px;
    font-weight: bold;
}

.thumb {
    width: 86px;
    display: flex;
    align-items: center;
    justify-content: center;
    background-color: #ebebeb;
}

.folder-name {
    padding: 7px;
}

/* Tab bar */
.workspace {
    flex: 1;
    min-width: 0;
    display: flex;
    flex-direction: column;
    background-color: #f1f1f1;
}

.tab-bar {
    height: 40px;
    display: flex;
    align-items: flex-end;
    background-color: #cbcbcb;
    fill: #666;
}

.quick-access {
    width: 242px;
    height: 40px;
    display: flex;
    align-items: center;
    justify-content: space-between;
    padding: 0 8px 0 12px;
}

.quick-access button {
    gap: 8px;
}

.disabled {
    fill: #999;
}

.document-tab {
    flex: 1;
    height: 35px;
    display: flex;
    align-items: center;
    gap: 5px;
    padding-right: 8px;
    border-radius: 5px 5px 0 0;
    background-color: #f1f1f1;
    font-size: 15px;
}

.document-tab > svg {
    margin-left: auto;
}

.close-tab {
    margin-left: auto;
}

.new-tab {
    width: 36px;
    height: 35px;
    margin-left: 5px;
    border-radius: 5px 5px 0 0;
    background-color: #b8b8b8;
}

.account {
    height: 40px;
    display: flex;
    align-items: center;
    gap: 21px;
    padding: 0 14px;
}

.account span {
    margin-left: 5px;
}

.bell {
    margin-left: 10px;
}

.avatar {
    width: 31px;
    height: 31px;
    margin-left: 2px;
    border-radius: 50%;
    background-color: #f1f1f1;
    font-size: 12px;
}

/* Ribbon */
.ribbon {
    height: 102px;
    display: flex;
    border-bottom: 1px solid #ddd;
    font-size: 12px;
    color: #333;
}

.caret {
    fill: currentColor;
}

.tab-bar .caret {
    fill: inherit;
}

.design {
    width: 138px;
    height: 77px;
    gap: 6px;
    margin: 13px 14px 0;
    border: 2px solid #e2e2e2;
    border-radius: 5px;
    font-weight: bold;
}

.ribbon-main {
    flex: 1;
    min-width: 0;
}

.ribbon-tabs {
    height: 28px;
    display: flex;
    gap: 29px;
    padding-left: 6px;
}

.ribbon-tabs button {
    height: 30px;
    padding: 0 16px;
    border-top: 1px solid transparent;
    border-bottom: 3px solid transparent;
}

.ribbon-tabs .active {
    border-top-color: #cdeaf7;
    border-bottom-color: #0696d7;
    background-color: #cdeaf7;
    color: #0696d7;
    font-weight: bold;
}

.groups {
    height: 73px;
    display: flex;
}

.group {
    position: relative;
    display: flex;
    flex-direction: column;
    align-items: center;
    padding-top: 2px;
}

.group:not(.finish):not(.select)::after {
    content: "";
    position: absolute;
    top: 5px;
    right: 0;
    width: 2px;
    height: 63px;
    background-color: #dedede;
}

.create {
    width: 328px;
    padding-right: 12px;
}

.modify {
    width: 175px;
}

.constraints {
    width: 282px;
}

.inspect {
    width: 99px;
}

.insert {
    width: 121px;
}

.select {
    width: 91px;
}

.finish {
    width: 129px;
    margin: 0 16px 0 auto;
    background-color: #cdeaf7;
}

.tools {
    display: flex;
    gap: 6px;
}

.create .tools {
    gap: 5px;
}

.tools button {
    width: 48px;
    height: 48px;
}

.tools .active {
    background-color: #0696d7;
}

.tools svg {
    width: 48px;
    height: 48px;
    fill: none;
    stroke: #666;
    stroke-width: 1.5;
}

.tools .blue {
    stroke: #3a9fea;
}

.tools .red {
    stroke: #d5474b;
}

.tools .pt {
    fill: #1b8fe6;
    stroke: none;
}

.group-label {
    height: 24px;
    gap: 5px;
}

/* Update banner */
.banner {
    height: 40px;
    display: flex;
    align-items: center;
    justify-content: center;
    padding: 0 21px 0 65px;
    background-color: #ffc26e;
    color: #fff;
    font-size: 17px;
    font-weight: bold;
    white-space: nowrap;
}

.banner p {
    flex: 1;
    margin: 0;
}

/* Canvas */
.canvas {
    position: relative;
    flex: 1;
    min-height: 0;
    overflow: hidden;
    background-color: #fff;
}

.drawing {
    width: 100%;
    height: 100%;
}

.axis-labels,
.dimension {
    font-size: 19px;
    fill: #777;
}

.dimension {
    fill: #555;
}

.axis-names {
    font-size: 16px;
    font-weight: bold;
}

.view-cube {
    filter: drop-shadow(0 0 6px #ccc);
}

.view-cube text {
    font-size: 12px;
    font-weight: bold;
    fill: #93989e;
}

.browser {
    position: absolute;
    top: 5px;
    left: 6px;
    width: 375px;
}

.panel-header {
    height: 31px;
    display: flex;
    align-items: center;
    padding: 0 2px 0 5px;
    border: 1px solid #ccc;
    background-color: #f1f1f1;
    font-size: 12px;
    color: #666;
    fill: #333;
}

.panel-header span {
    flex: 1;
    padding-left: 12px;
}

.grip {
    width: 4px;
    height: 14px;
    margin-left: 8px;
    border: solid #999;
    border-width: 0 1px;
}

.tree {
    margin: 4px 0 0;
    padding: 0;
    list-style: none;
    font-size: 13px;
}

.tree li {
    height: 30px;
    display: flex;
    align-items: center;
    gap: 11px;
    padding-left: 45px;
}

.tree .root {
    gap: 10px;
    padding-left: 20px;
}

.node {
    height: 25px;
    display: flex;
    align-items: center;
    gap: 18px;
    padding: 0 14px 0 3px;
    background-color: #f1f1f1;
}

.node.nested {
    padding-right: 12px;
}

.node.nested svg:first-child {
    margin-right: -7px;
}

.root .node {
    gap: 6px;
    padding: 0 10px 0 4px;
}

.selected {
    height: 20px;
    display: flex;
    align-items: center;
    gap: 18px;
    padding: 0 12px 0 4px;
    background-color: #999;
    color: #fff;
    font-size: 14px;
    font-weight: bold;
}

.grey {
    color: #999;
    fill: #999;
}

.comments {
    position: absolute;
    left: 6px;
    bottom: 5px;
    width: 375px;
}

.comments span {
    padding-left: 25px;
}

.nav-bar {
    position: absolute;
    left: 50%;
    bottom: 5px;
    height: 30px;
    display: flex;
    align-items: center;
    gap: 11px;
    padding: 0 4px;
    background-color: #f1f1f1;
    transform: translateX(-50%);
}

.nav-bar button {
    gap: 3px;
}

.tooltip {
    position: absolute;
    top: 368px;
    right: 329px;
    padding: 0 2px;
    border: 1px solid #777;
    background-color: #f0f0f0;
    color: #111;
    font-family: "Open Sans", "Noto Sans", sans-serif;
    font-size: 12px;
    line-height: 15px;
}

/* Sketch palette */
.palette {
    position: absolute;
    top: 133px;
    right: 4px;
    bottom: 37px;
    width: 313px;
    display: flex;
    flex-direction: column;
    border: 1px solid #ccc;
    background-color: #f1f1f1;
}

.palette-header {
    height: 30px;
    display: flex;
    align-items: center;
    padding-right: 5px;
    border-bottom: 1px solid #ccc;
    font-size: 12px;
    color: #666;
    fill: #333;
}

.palette-header .grip {
    margin: 0 9px 0 1px;
}

.palette-header span {
    flex: 1;
    padding-left: 5px;
}

.palette-body {
    flex: 1;
    min-height: 0;
    display: flex;
    overflow: hidden;
}

.options {
    flex: 1;
    height: 526px;
    display: grid;
    grid-auto-rows: 1fr;
}

.options h2 {
    display: flex;
    align-items: center;
    gap: 6px;
    margin: 0;
    padding-left: 6px;
    font-size: 14px;
}

.option {
    display: flex;
    align-items: center;
    gap: 8px;
    padding-left: 15px;
}

.option span {
    width: 178px;
    white-space: nowrap;
}

.option button {
    width: 28px;
    height: 34px;
}

.option .active {
    background-color: #0696d7;
}

.option input {
    appearance: none;
    width: 16px;
    height: 16px;
    margin: 0 6px;
    border: 1px solid #777;
    border-radius: 3px;
    background: linear-gradient(#f4f4f4, #bbb);
}

.option input:checked {
    border-color: #555;
    background: linear-gradient(#ababab, #e4e4e4);
}

.option input:checked::after {
    content: "";
    display: block;
    width: 5px;
    height: 10px;
    margin: 0 0 0 5px;
    border: solid #111;
    border-width: 0 2px 2px 0;
    transform: rotate(40deg);
}

.scrollbar {
    width: 8px;
    margin-right: 3px;
    background-color: #c4c6c8;
}

.scrollbar i {
    display: block;
    height: 90%;
    border: 1px solid #888;
    border-radius: 4px;
    background-color: #999;
}

.palette-footer {
    height: 46px;
    display: flex;
    align-items: center;
    justify-content: flex-end;
    padding-right: 14px;
    border-top: 1px solid #aaa;
}

.palette-footer button {
    height: 25px;
    padding: 0 5px;
    border: 1px solid #aaa;
    background-color: #e6e6e6;
    color: #888;
    font-size: 15px;
}

/* Timeline */
.timeline {
    height: 55px;
    display: flex;
    align-items: center;
    gap: 15px;
    padding: 6px 16px 0 14px;
    border-top: 3px solid #ccc;
    fill: #444;
}

.feature {
    margin: -6px 0 0 12px;
}

.timeline-settings {
    margin-left: auto;
    color: #999;
}

/* Windows taskbar */
.taskbar {
    height: 50px;
    display: flex;
    background: linear-gradient(to right, #e2d1e2, #e9d5ea 42%, #e2d1d5 60%, #e2d1d3 72%, #ead7d7);
    color: #111;
    font-family: "Open Sans", "Noto Sans", sans-serif;
}

.taskbar > button {
    width: 60px;
}

.search {
    width: 430px;
    display: flex;
    align-items: center;
    gap: 14px;
    padding: 0 15px;
    border: 1px solid #ccc;
    background-color: #fff;
}

.search input {
    flex: 1;
    min-width: 0;
    padding: 0;
    border: none;
    outline: none;
    font: inherit;
    font-size: 18px;
}

.search input::placeholder {
    color: #444;
}

.apps {
    display: flex;
    padding-left: 2px;
}

.apps button {
    position: relative;
    width: 62px;
}

.apps button::after {
    content: "";
    position: absolute;
    right: 5px;
    bottom: 0;
    left: 6px;
    height: 3px;
    background-color: #00b7c3;
}

.apps .stacked::after {
    background: linear-gradient(to right, #00b7c3 80%, #66d4db 80%);
}

.apps .current {
    background-color: #f2eaeb;
}

.apps .current::after {
    right: 0;
    left: 0;
}

.apps svg {
    width: 29px;
    height: 29px;
}

.apps text {
    fill: #fff;
    font-size: 12px;
    font-weight: bold;
}

.apps .count {
    font-size: 14px;
    font-weight: normal;
}

.apps .tiny {
    fill: #d08040;
    font-size: 6px;
}

.tray {
    display: flex;
    align-items: center;
    gap: 12px;
    margin-left: auto;
    padding-right: 20px;
    font-size: 14px;
    line-height: 23px;
}

.tray svg {
    fill: none;
    stroke: #111;
    stroke-width: 1.3;
}

.language {
    margin-left: 2px;
}

.clock {
    margin: 0 12px 0 5px;
}

.action-center {
    position: relative;
    padding-top: 6px;
}

.action-center span {
    position: absolute;
    right: 0;
    bottom: 1px;
    width: 20px;
    height: 20px;
    border: 1px solid #777;
    border-radius: 50%;
    background-color: #d2c8c8;
    font-weight: bold;
    line-height: 18px;
}
```
